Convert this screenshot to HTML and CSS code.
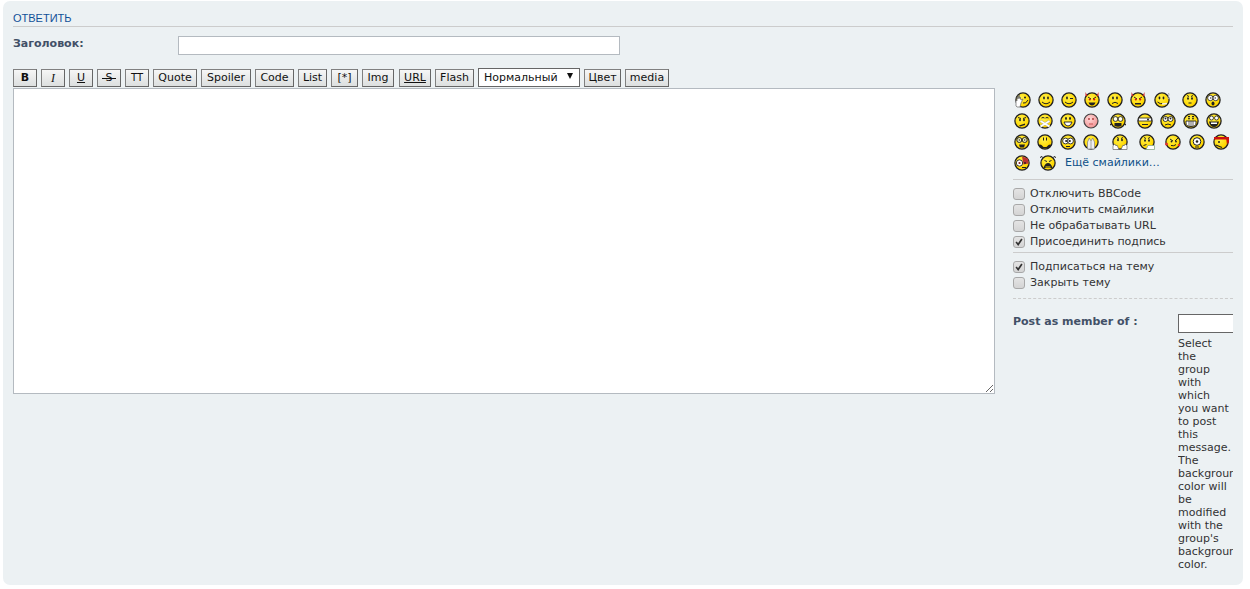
FILE: index.html
```html
<!DOCTYPE html>
<html lang="ru">
<head>
<meta charset="utf-8">
<title>Ответить</title>
<link rel="stylesheet" href="styles.css">
</head>
<body>
<svg class="defs" width="0" height="0" aria-hidden="true">
  <defs>
    <radialGradient id="y" cx="40%" cy="35%" r="75%"><stop offset="0" stop-color="#fff04a"/><stop offset=".7" stop-color="#ffd800"/><stop offset="1" stop-color="#f2b800"/></radialGradient>
    <radialGradient id="p" cx="40%" cy="35%" r="70%"><stop offset="0" stop-color="#ffd8d8"/><stop offset="1" stop-color="#f09090"/></radialGradient>
    <symbol id="f" viewBox="0 0 16 16"><circle cx="8" cy="8" r="7.100" fill="url(#y)" stroke="#222" stroke-width="1.300"/></symbol>
  </defs>
</svg>
<main class="panel">
  <h3 class="title">ОТВЕТИТЬ</h3>
  <div class="subject">
    <label class="subject-label">Заголовок:</label>
    <input class="subject-input" type="text">
  </div>
  <div class="editor">
    <div class="left">
      <div class="toolbar">
        <span class="btn w24 b">B</span><span class="btn w24 i">I</span><span class="btn w24 u">U</span><span class="btn w24 s">S</span><span class="btn w24 tt">TT</span><span class="btn w44">Quote</span><span class="btn w50">Spoiler</span><span class="btn w39">Code</span><span class="btn w29">List</span><span class="btn w27">[*]</span><span class="btn w32">Img</span><span class="btn w32 u url">URL</span><span class="btn w39">Flash</span><span class="sel">Нормальный<span class="arrow"></span></span><span class="btn w37">Цвет</span><span class="btn w44">media</span>
      </div>
      <textarea class="message"></textarea>
    </div>
    <aside class="right">
      <div class="smileys">
        <div class="row">
          <svg class="sm ml2" viewBox="0 0 16 16"><use href="#f"/><circle cx="10" cy="5.500" r="1" fill="#222"/><path d="M8 11q3 1 5-3" fill="none" stroke="#222"/><path d="M1 14V8l1 1V5l1 2V3.500l1 3V3l1 3.500V5l1 3 2-1-2 4-1 4H2z" fill="#fff" stroke="#666" stroke-width=".7"/></svg>
          <svg class="sm" viewBox="0 0 16 16"><use href="#f"/><ellipse cx="6" cy="6" rx=".9" ry="1.400" fill="#222"/><ellipse cx="10" cy="6" rx=".9" ry="1.400" fill="#222"/><path d="M4 10q4 3.500 8 0" fill="none" stroke="#222"/></svg>
          <svg class="sm" viewBox="0 0 16 16"><use href="#f"/><ellipse cx="6" cy="6" rx=".9" ry="1.400" fill="#222"/><path d="M9 6.500h3M4 10q4 3.500 8 0" fill="none" stroke="#222"/></svg>
          <svg class="sm" viewBox="0 0 16 16"><use href="#f"/><path d="M1.500 0v4h2zM14.500 0v4h-2z" fill="#c22"/><path d="M4 5l3 2M12 5L9 7" stroke="#222"/><circle cx="5.800" cy="7.500" r="1.100" fill="#d11"/><circle cx="10.200" cy="7.500" r="1.100" fill="#d11"/><path d="M4.500 10.500h7q-1 3-3.500 3t-3.500-3z" fill="#222"/></svg>
          <svg class="sm" viewBox="0 0 16 16"><use href="#f"/><ellipse cx="6" cy="6" rx=".9" ry="1.400" fill="#222"/><ellipse cx="10" cy="6" rx=".9" ry="1.400" fill="#222"/><path d="M5 11.500q3-2.500 6 0" fill="none" stroke="#222"/></svg>
          <svg class="sm" viewBox="0 0 16 16"><use href="#f"/><path d="M1.500 0v4h2zM14.500 0v4h-2z" fill="#c22"/><path d="M4 5l3 2M12 5L9 7" stroke="#222"/><circle cx="5.800" cy="7.500" r="1.100" fill="#d11"/><circle cx="10.200" cy="7.500" r="1.100" fill="#d11"/><path d="M5 11h6v1.500H5z" fill="#222"/></svg>
          <svg class="sm ml8" viewBox="0 0 16 16"><use href="#f"/><ellipse cx="5.500" cy="6" rx=".9" ry="1.400" fill="#222"/><ellipse cx="9.500" cy="6" rx=".9" ry="1.400" fill="#222"/><path d="M3.500 10q3 2.500 5 1.500" fill="none" stroke="#222"/><path d="M8 12l5-.5" stroke="#eee" stroke-width="1.600"/><path d="M14.500 1q1 2 0 3t0 3" fill="none" stroke="#aaa"/></svg>
          <svg class="sm ml12" viewBox="0 0 16 16"><use href="#f"/><path d="M5 3.500l2 1M9 4.500l2-1" stroke="#222"/><ellipse cx="6" cy="6.500" rx=".9" ry="1.300" fill="#222"/><ellipse cx="10" cy="6.500" rx=".9" ry="1.300" fill="#222"/><path d="M6.500 11h3" stroke="#222"/></svg>
          <svg class="sm" viewBox="0 0 16 16"><use href="#f"/><circle cx="5.300" cy="6" r="2.700" fill="#fff" stroke="#222" stroke-width=".8"/><circle cx="10.700" cy="6" r="2.700" fill="#fff" stroke="#222" stroke-width=".8"/><circle cx="5.800" cy="6" r=".7" fill="#222"/><circle cx="10.200" cy="6" r=".7" fill="#222"/><ellipse cx="8" cy="11.500" rx="1.500" ry="2" fill="#222"/></svg>
        </div>
        <div class="row">
          <svg class="sm" viewBox="0 0 16 16"><use href="#f"/><path d="M4 4.500l3 1M9 5.500l3-1" stroke="#222"/><ellipse cx="6" cy="7" rx=".9" ry="1.200" fill="#222"/><ellipse cx="10" cy="7" rx=".9" ry="1.200" fill="#222"/><path d="M5 12.500l6-2v1.500l-5 1.500z" fill="#222"/></svg>
          <svg class="sm" viewBox="0 0 16 16"><use href="#f"/><path d="M4.500 5q1.500-1 3 0M8.500 5q1.500-1 3 0" fill="none" stroke="#222"/><path d="M3.500 8l9 5.500M12.500 8l-9 5.500" stroke="#999" stroke-width="2.600"/><path d="M3.500 8l9 5.500M12.500 8l-9 5.500" stroke="#fff" stroke-width="1.700"/></svg>
          <svg class="sm" viewBox="0 0 16 16"><use href="#f"/><ellipse cx="6" cy="5.500" rx=".9" ry="1.400" fill="#222"/><ellipse cx="10" cy="5.500" rx=".9" ry="1.400" fill="#222"/><path d="M4 9h8q-1 4-4 4t-4-4z" fill="#fff" stroke="#222" stroke-width=".9"/></svg>
          <svg class="sm" viewBox="0 0 16 16"><circle cx="8" cy="8" r="7" fill="url(#p)" stroke="#444" stroke-width="1.200"/><circle cx="6" cy="6" r=".9" fill="#a33"/><circle cx="10" cy="6" r=".9" fill="#a33"/><path d="M6 11h4" stroke="#c55"/></svg>
          <svg class="sm ml11" viewBox="0 0 16 16"><path d="M0 12l3-2M16 12l-3-2" stroke="#222" stroke-width="1.200"/><use href="#f"/><circle cx="5.500" cy="6" r="2.400" fill="#ffe" stroke="#222" stroke-width=".9"/><circle cx="10.500" cy="6" r="2.400" fill="#ffe" stroke="#222" stroke-width=".9"/><path d="M4.500 13v-3h7v3q-3.500 1.500-7 0z" fill="#222"/></svg>
          <svg class="sm ml11" viewBox="0 0 16 16"><use href="#f"/><path d="M1.500 5h13v3h-13z" fill="#fff" stroke="#222" stroke-width=".8"/><circle cx="11" cy="6.500" r="1" fill="#222"/><path d="M5 11.500h6" stroke="#222"/></svg>
          <svg class="sm" viewBox="0 0 16 16"><use href="#f"/><circle cx="5.500" cy="6" r="2.500" fill="#fff" stroke="#222" stroke-width=".9"/><circle cx="10.500" cy="6" r="2.500" fill="#fff" stroke="#222" stroke-width=".9"/><circle cx="5.500" cy="5.500" r=".9" fill="#222"/><circle cx="10.500" cy="5.500" r=".9" fill="#222"/><path d="M5 12q3-2 6 0" fill="none" stroke="#222"/></svg>
          <svg class="sm" viewBox="0 0 16 16"><use href="#f"/><path d="M5 3.500h2M9 3.500h2" stroke="#222"/><ellipse cx="6" cy="5.500" rx=".9" ry="1.100" fill="#222"/><ellipse cx="10" cy="5.500" rx=".9" ry="1.100" fill="#222"/><path d="M3 8h10v2q0 3.500-5 3.500T3 10z" fill="#fff" stroke="#222" stroke-width=".9"/><path d="M6 8v5M8 8v5.500M10 8v5" stroke="#222" stroke-width=".7"/></svg>
          <svg class="sm" viewBox="0 0 16 16"><use href="#f"/><circle cx="5.500" cy="5" r="2" fill="#fff" stroke="#222" stroke-width=".8"/><circle cx="10.500" cy="5" r="2" fill="#fff" stroke="#222" stroke-width=".8"/><path d="M3 8.500h10q-1 5.500-5 5.500t-5-5.500z" fill="#222"/><path d="M5 9.500h6v1.500H5z" fill="#fff"/></svg>
        </div>
        <div class="row row-shift">
          <svg class="sm" viewBox="0 0 16 16"><use href="#f"/><circle cx="5.300" cy="6" r="2.500" fill="#eeb" stroke="#222" stroke-width="1"/><circle cx="10.700" cy="6" r="2.500" fill="#eeb" stroke="#222" stroke-width="1"/><circle cx="5.300" cy="6" r=".7" fill="#222"/><circle cx="10.700" cy="6" r=".7" fill="#222"/><path d="M5 10.500h6l-1 3H6z" fill="#222"/></svg>
          <svg class="sm" viewBox="0 0 16 16"><use href="#f"/><path d="M6.500 3.500v3M9.500 3.500v3" stroke="#222"/><path d="M1.500 11q1.500-1 3 0l2 2h3l2-2q1.500-1 3 0-1 3.500-6.500 3.500T1.500 11z" fill="#222"/></svg>
          <svg class="sm" viewBox="0 0 16 16"><use href="#f"/><circle cx="5.500" cy="7" r="2.900" fill="#fff" stroke="#222" stroke-width=".9"/><circle cx="10.500" cy="7" r="2.900" fill="#fff" stroke="#222" stroke-width=".9"/><circle cx="6.200" cy="7" r="1.100" fill="#222"/><circle cx="9.800" cy="7" r="1.100" fill="#222"/><path d="M6 12.500h4" stroke="#222"/></svg>
          <svg class="sm" viewBox="0 0 16 16"><use href="#f"/><path d="M4.500 15V8l1.800-4 1.700 3 1.700-3 1.800 4v7z" fill="#eee" stroke="#888" stroke-width=".8"/><path d="M8 7v8" stroke="#888" stroke-width=".7"/></svg>
          <svg class="sm ml13" viewBox="0 0 16 16"><use href="#f"/><path d="M5 3.500l2 1M9 4.500l2-1" stroke="#222"/><ellipse cx="6" cy="6" rx=".9" ry="1.200" fill="#222"/><ellipse cx="10" cy="6" rx=".9" ry="1.200" fill="#222"/><path d="M1 15.500v-4l2-1.500 1 2 1-1 2 4.500zM15 15.500v-4l-2-1.500-1 2-1-1-2 4.500z" fill="#fff" stroke="#666" stroke-width=".7"/></svg>
          <svg class="sm ml11" viewBox="0 0 16 16"><use href="#f"/><path d="M5 3.500l2 1M9 4.500l2-1" stroke="#222"/><ellipse cx="6" cy="6.500" rx=".9" ry="1.200" fill="#222"/><ellipse cx="10" cy="6.500" rx=".9" ry="1.200" fill="#222"/><path d="M4.500 11.500l3-1" stroke="#222"/><path d="M7 15.500l2-4h6.500v4z" fill="#fff" stroke="#8a8" stroke-width=".8"/></svg>
          <svg class="sm ml10" viewBox="0 0 16 16"><use href="#f"/><path d="M5 5l3 2M13 4l-3 3" stroke="#222"/><circle cx="6.500" cy="7.500" r=".9" fill="#222"/><circle cx="11" cy="7.500" r=".9" fill="#222"/><path d="M6 11.500q3 1 5-1" fill="none" stroke="#222"/><circle cx="1.500" cy="10" r="1.500" fill="#d33"/><circle cx="14" cy="11" r="1.200" fill="#d33"/></svg>
          <svg class="sm ml8" viewBox="0 0 16 16"><use href="#f"/><circle cx="8" cy="7.500" r="3.800" fill="#fff" stroke="#222" stroke-width="1"/><circle cx="8" cy="7.500" r="1.300" fill="#222"/><path d="M6 13h4" stroke="#222"/></svg>
          <svg class="sm ml8" viewBox="0 0 16 16"><use href="#f"/><path d="M1 3h15v2.500H1z" fill="#c11"/><path d="M13 3h3v7l-1-2-1 3z" fill="#c11"/><circle cx="6" cy="8" r="1" fill="#222"/><path d="M3 11l6 2.500" stroke="#222" stroke-width="1.200"/></svg>
        </div>
        <div class="row">
          <svg class="sm" viewBox="0 0 16 16"><use href="#f"/><path d="M8 1.500l6 2 .5 5-5 1z" fill="#b33"/><circle cx="5.500" cy="8" r="3.200" fill="#fff" stroke="#222" stroke-width=".9"/><circle cx="5.500" cy="8" r="1.100" fill="#822"/><circle cx="11" cy="8" r=".9" fill="#222"/><path d="M8 12.500h4" stroke="#222"/></svg>
          <svg class="sm ml10" viewBox="0 0 16 16"><path d="M0 2.500l2-1 2 2M16 2.500l-2-1-2 2" fill="none" stroke="#222"/><use href="#f"/><path d="M4.500 5.500l2.500 1M9 6.500l2.500-1" stroke="#222"/><path d="M3.500 13q1.500-5 4.500-5t4.500 5z" fill="#222"/><path d="M5.500 12h5" stroke="#fd0"/></svg>
          <a class="more">Ещё смайлики…</a>
        </div>
      </div>
      <hr class="rule">
      <ul class="opts">
        <li><span class="cb"></span>Отключить BBCode</li>
        <li><span class="cb"></span>Отключить смайлики</li>
        <li><span class="cb"></span>Не обрабатывать URL</li>
        <li><span class="cb"><svg viewBox="0 0 12 12"><path d="M2.500 6l2.500 3 4.500-6.500" fill="none" stroke="#333" stroke-width="2"/></svg></span>Присоединить подпись</li>
      </ul>
      <hr class="rule">
      <ul class="opts">
        <li><span class="cb"><svg viewBox="0 0 12 12"><path d="M2.500 6l2.500 3 4.500-6.500" fill="none" stroke="#333" stroke-width="2"/></svg></span>Подписаться на тему</li>
        <li><span class="cb"></span>Закрыть тему</li>
      </ul>
      <hr class="dash">
      <div class="member">
        <label class="member-label">Post as member of :</label>
        <div class="member-field">
          <span class="member-select"></span>
          <p class="member-note">Select the group with which you want to post this message. The background color will be modified with the group's background color.</p>
        </div>
      </div>
    </aside>
  </div>
</main>
</body>
</html>
```
FILE: styles.css
```css
* { box-sizing: border-box; }
html, body { margin: 0; padding: 0; background: #fff; }
body { padding: 1px 7px 4px 3px; font-family: "DejaVu Sans", Verdana, sans-serif; font-size: 11px; color: #333; }
.defs { position: absolute; }
.panel { height: 584px; background: #ecf1f3; border-radius: 7px; padding: 12px 10px 0; overflow: hidden; }
.title { margin: 0; height: 14px; font: normal 11px/11px "Liberation Sans", Arial, sans-serif; color: #115098; border-bottom: 1px solid #ccc; }
.subject { display: flex; align-items: flex-start; margin-top: 9px; height: 33px; }
.subject-label { width: 165px; font-weight: bold; font-size: 11px; line-height: 16px; color: #425067; }
.subject-input { width: 442px; height: 19px; border: 1px solid #b4bac0; background: #fff; padding: 0; margin: 0; }
.editor { display: flex; align-items: flex-start; }
.left { width: 982px; flex: none; }
.toolbar { display: flex; gap: 4px; height: 19px; align-items: flex-start; }
.btn { position: relative; height: 18px; padding: 0; line-height: 16px; font-size: 11px; color: #111; border: 1px solid #666; border-left-color: #808080; border-top-color: #808080; background: linear-gradient(#f6f6f6, #dcdfdf); text-align: center; white-space: nowrap; }
.w24 { width: 24px; }
.w27 { width: 27px; }
.w29 { width: 29px; }
.w32 { width: 32px; }
.w37 { width: 37px; }
.w39 { width: 39px; }
.w44 { width: 44px; }
.w50 { width: 50px; }
.btn.url { margin-left: 1px; }
.btn.b { font-weight: bold; }
.btn.i { font-style: italic; font-family: "Liberation Serif", serif; font-size: 12px; }
.btn.u { text-decoration: underline; }
.btn.s::after { content: ""; position: absolute; left: 4px; right: 4px; top: 8px; height: 1px; background: #111; }
.btn.tt { font-size: 10px; }
.sel { position: relative; width: 102px; height: 19px; margin-top: -1px; line-height: 18px; padding-left: 5px; border: 1px solid #666; background: #fff; font-size: 11px; color: #111; white-space: nowrap; }
.arrow { position: absolute; right: 6px; top: 4px; border: 3.5px solid transparent; border-top: 6px solid #111; border-bottom: 0; }
.message { display: block; width: 982px; height: 306px; margin: 0; padding: 0; border: 1px solid #b4bac0; background: #fff; }
.right { margin-left: 18px; width: 220px; overflow: hidden; flex: none; }
.smileys { padding-top: 20px; height: 110px; }
.row { display: flex; height: 21px; align-items: center; }
.row-shift { margin-top: 1px; height: 20px; }
.sm { width: 16px; height: 16px; flex: none; margin-left: 7px; }
.sm:first-child { margin-left: 1px; }
.sm.ml2:first-child { margin-left: 2px; }
.sm.ml8 { margin-left: 8px; }
.sm.ml10 { margin-left: 10px; }
.sm.ml11 { margin-left: 11px; }
.sm.ml12 { margin-left: 12px; }
.sm.ml13 { margin-left: 13px; }
.more { margin-left: 9px; color: #105289; }
.rule { height: 1px; margin: 0; border: 0; background: #ccc; }
.opts { list-style: none; margin: 0; padding: 6px 0 2px; }
.opts li { display: flex; align-items: center; height: 16px; color: #333; line-height: 16px; }
.cb { display: block; width: 12px; height: 12px; margin-right: 5px; border: 1px solid #a8a8a8; border-radius: 3px; background: linear-gradient(#e4e4e4, #d4d4d4); }
.cb svg { display: block; width: 10px; height: 10px; }
.dash { height: 0; margin: 5px 0 0; border: 0; border-top: 1px dashed #ccc; }
.member { display: flex; align-items: flex-start; margin-top: 15px; }
.member-label { width: 165px; font-weight: bold; color: #425067; line-height: 16px; flex: none; }
.member-field { width: 55px; overflow: hidden; }
.member-select { display: block; width: 90px; height: 19px; border: 1px solid #666; background: #fff; }
.member-note { margin: 4px 0 0; line-height: 13px; color: #333; width: 52px; }
```
